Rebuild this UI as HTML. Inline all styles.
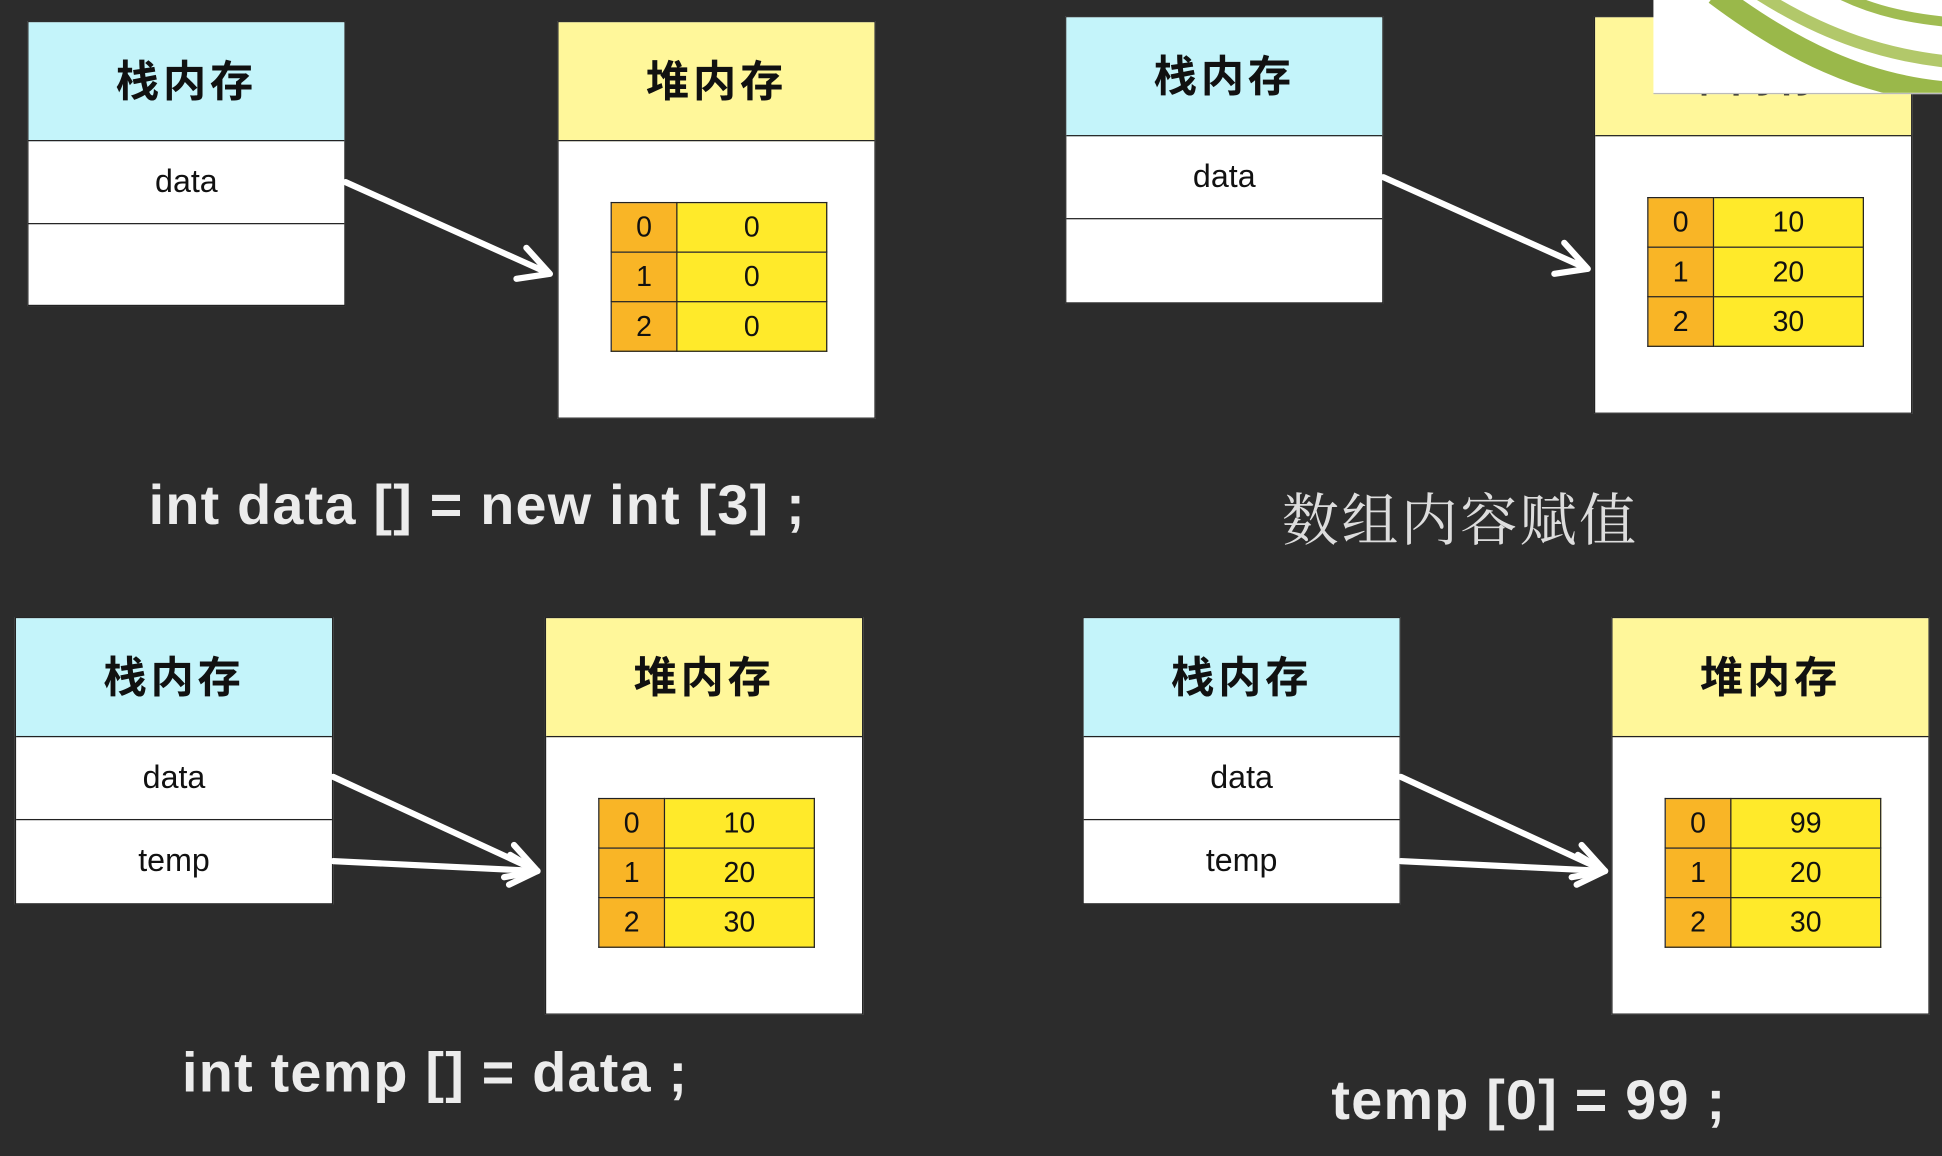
<!DOCTYPE html>
<html><head><meta charset="utf-8"><style>
html,body{margin:0;padding:0;}
body{width:1942px;height:1156px;overflow:hidden;background:#2c2c2c;}
#w{position:absolute;left:0;top:0;width:1568px;height:933px;transform:scale(1.23852,1.239);transform-origin:0 0;font-family:"Liberation Sans","Noto Sans CJK SC",sans-serif;}
.b{position:absolute;background:#fff;border:1.5px solid #222;box-sizing:border-box;}
.h{position:absolute;left:0;right:0;top:0;height:95px;border-bottom:1.5px solid #222;font-family:"Noto Sans CJK SC",sans-serif;font-weight:bold;font-size:35px;color:#111;text-align:center;line-height:92px;letter-spacing:3px;}
.c{background:#c4f4fa}.y{background:#fff79a}
.r{position:absolute;left:0;right:0;height:67px;line-height:67px;text-align:center;font-size:26px;color:#111;}
.r1{top:95px;border-bottom:1.5px solid #222}.r2{top:162px}
table{position:absolute;border-collapse:collapse;width:175px;}
td{border:1.5px solid #222;height:39px;padding:0;font-size:23px;text-align:center;color:#111;}
td.i{background:#f9b526;width:52px;}td.v{background:#ffea2a;}
.t{position:absolute;color:#ececec;font-weight:bold;font-size:45px;white-space:nowrap;letter-spacing:1px;}
</style></head><body><div id="w">
<div class="b" style="left:22px;top:17px;width:257px;height:230px"><div class="h c">栈内存</div><div class="r r1">data</div></div>
<div class="b" style="left:450px;top:17px;width:257px;height:321px"><div class="h y">堆内存</div>
<table style="left:42px;top:145px"><tr><td class="i">0</td><td class="v">0</td></tr><tr><td class="i">1</td><td class="v">0</td></tr><tr><td class="i">2</td><td class="v">0</td></tr></table></div>
<div class="t" style="left:120px;top:382px">int data [] = new int [3] ;</div>

<div class="b" style="left:860px;top:13px;width:257px;height:232px"><div class="h c">栈内存</div><div class="r r1">data</div></div>
<div class="b" style="left:1287px;top:13px;width:257px;height:321px"><div class="h y">堆内存</div>
<table style="left:42px;top:145px"><tr><td class="i">0</td><td class="v">10</td></tr><tr><td class="i">1</td><td class="v">20</td></tr><tr><td class="i">2</td><td class="v">30</td></tr></table></div>
<div class="t" style="left:1035px;top:384px;font-weight:normal;font-size:46px;color:#ddd;font-family:'Noto Serif CJK SC',serif;letter-spacing:2px">数组内容赋值</div>
<div style="position:absolute;left:1335px;top:0;width:233px;height:75px;background:#fff;overflow:hidden;border-bottom:1px solid #bbb">
<svg width="233" height="75"><path d="M50 -5 C110 40 170 70 240 75" stroke="#9ab84a" stroke-width="18" fill="none"/><path d="M85 -5 C140 30 190 45 240 50" stroke="#b2c86a" stroke-width="10" fill="none"/><path d="M150 -5 C180 10 210 15 240 18" stroke="#a0bc52" stroke-width="8" fill="none"/></svg></div>

<div class="b" style="left:12px;top:498px;width:257px;height:232px"><div class="h c">栈内存</div><div class="r r1">data</div><div class="r r2">temp</div></div>
<div class="b" style="left:440px;top:498px;width:257px;height:321px"><div class="h y">堆内存</div>
<table style="left:42px;top:145px"><tr><td class="i">0</td><td class="v">10</td></tr><tr><td class="i">1</td><td class="v">20</td></tr><tr><td class="i">2</td><td class="v">30</td></tr></table></div>
<div class="t" style="left:147px;top:840px">int temp [] = data ;</div>

<div class="b" style="left:874px;top:498px;width:257px;height:232px"><div class="h c">栈内存</div><div class="r r1">data</div><div class="r r2">temp</div></div>
<div class="b" style="left:1301px;top:498px;width:257px;height:321px"><div class="h y">堆内存</div>
<table style="left:42px;top:145px"><tr><td class="i">0</td><td class="v">99</td></tr><tr><td class="i">1</td><td class="v">20</td></tr><tr><td class="i">2</td><td class="v">30</td></tr></table></div>
<div class="t" style="left:1075px;top:862px">temp [0] = 99 ;</div>

<svg style="position:absolute;left:0;top:0" width="1568" height="933" fill="none" stroke="#fff" stroke-width="5" stroke-linecap="round" stroke-linejoin="round">
<path d="M279 147 L444 221 M425 200 L444 221 L417 225"/>
<path d="M1117 143 L1282 217 M1263 196 L1282 217 L1255 221"/>
<path d="M269 627 L434 703 M415 682 L434 703 L407 708"/>
<path d="M269 695 L434 703 M412 690 L434 703 L411 714"/>
<path d="M1131 627 L1296 703 M1277 682 L1296 703 L1269 708"/>
<path d="M1131 695 L1296 703 M1274 690 L1296 703 L1273 714"/>
</svg>
</div></body></html>
